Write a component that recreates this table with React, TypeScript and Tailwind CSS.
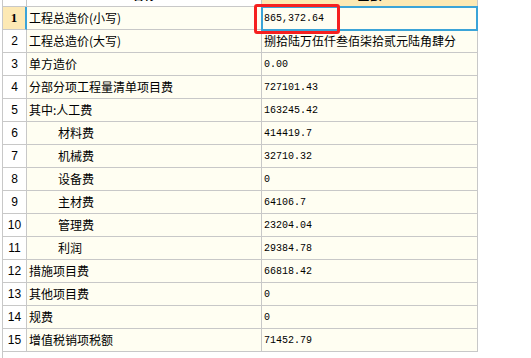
const rows: { name: string; value: string; indent?: boolean; cjk?: boolean }[] = [
  { name: '工程总造价(小写)', value: '865,372.64' },
  { name: '工程总造价(大写)', value: '捌拾陆万伍仟叁佰柒拾贰元陆角肆分', cjk: true },
  { name: '单方造价', value: '0.00' },
  { name: '分部分项工程量清单项目费', value: '727101.43' },
  { name: '其中:人工费', value: '163245.42' },
  { name: '材料费', value: '414419.7', indent: true },
  { name: '机械费', value: '32710.32', indent: true },
  { name: '设备费', value: '0', indent: true },
  { name: '主材费', value: '64106.7', indent: true },
  { name: '管理费', value: '23204.04', indent: true },
  { name: '利润', value: '29384.78', indent: true },
  { name: '措施项目费', value: '66818.42' },
  { name: '其他项目费', value: '0' },
  { name: '规费', value: '0' },
  { name: '增值税销项税额', value: '71452.79' },
];

const cjk = "font-['Noto_Sans_CJK_SC',sans-serif]";
const mono = "font-['Liberation_Mono','Noto_Sans_CJK_SC',monospace]";

export default function App() {
  return (
    <div className="relative w-[531px] h-[358px] overflow-hidden bg-white text-black">
      <div className="ml-[2px] h-full border-l border-[#c8c8c8]">
        <div className="grid grid-cols-[24px_235px_216px]">
          {/* header row, scrolled almost out of view */}
          <div className="h-[7px] border-r border-b border-[#c8c8c8] bg-white" />
          <div className="h-[7px] border-r border-b border-[#c8c8c8] bg-white flex items-end justify-center overflow-hidden">
            <span className={`${cjk} text-[12px] leading-[12px] font-bold mb-[5px]`}>名称</span>
          </div>
          <div className="h-[7px] border-r border-b border-[#c8c8c8] bg-[#fde9b4] flex items-end justify-center overflow-hidden">
            <span className={`${cjk} text-[12px] leading-[12px] font-bold mb-[5px]`}>金额</span>
          </div>

          {rows.map((r, i) => {
            const first = i === 0;
            return [
              <div
                key={`n${i}`}
                className={`h-[23px] border-b border-[#c8c8c8] flex items-center justify-center text-[12px] ${
                  first
                    ? 'bg-[#fde9b4] border-r-2 border-r-[#3ba4d8] font-bold font-["Liberation_Serif",serif] text-[13px]'
                    : "bg-white border-r font-['Liberation_Sans',sans-serif]"
                }`}
              >
                {i + 1}
              </div>,
              <div
                key={`a${i}`}
                className={`h-[23px] border-r border-b border-[#c8c8c8] bg-[#fffef2] flex items-center ${cjk} text-[12px] ${
                  r.indent ? 'pl-[31px]' : 'pl-[2px]'
                }`}
              >
                {r.name}
              </div>,
              <div
                key={`v${i}`}
                className={`h-[23px] border-r border-b border-[#c8c8c8] bg-[#fffef2] flex items-center pl-[2px] ${
                  r.cjk ? `${cjk} text-[12px]` : `${mono} text-[10px]`
                }`}
              >
                {r.value}
              </div>,
            ];
          })}
        </div>
      </div>

      {/* selected cell outline */}
      <div className="absolute left-[261px] top-[6px] w-[217px] h-[25px] border-2 border-[#3ba4d8] pointer-events-none" />
      {/* red highlight box */}
      <div className="absolute left-[254px] top-[4px] w-[86px] h-[30px] border-[3px] border-[#f52020] rounded-[3px] pointer-events-none" />
    </div>
  );
}
